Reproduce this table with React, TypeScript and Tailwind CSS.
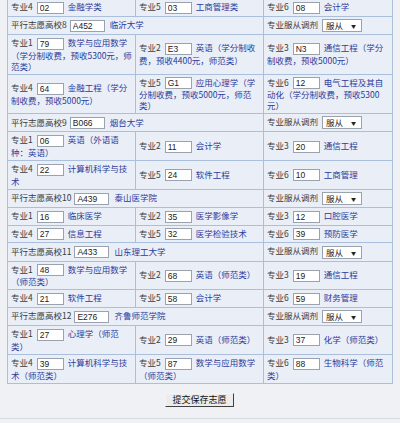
import React from "react";

// names are kept as the lines they break into in the form
type Major = { n: number; code: string; name: string[] };
type School = {
  no: number;
  code: string;
  name: string;
  majors: Major[];
};

const HEAD: Major[] = [
  { n: 4, code: "02", name: ["金融学类"] },
  { n: 5, code: "03", name: ["工商管理类"] },
  { n: 6, code: "08", name: ["会计学"] },
];

const SCHOOLS: School[] = [
  {
    no: 8,
    code: "A452",
    name: "临沂大学",
    majors: [
      { n: 1, code: "79", name: ["数学与应用数学", "（学分制收费，预收5300元，师", "范类）"] },
      { n: 2, code: "E3", name: ["英语（学分制收", "费，预收4400元，师范类）"] },
      { n: 3, code: "N3", name: ["通信工程（学分", "制收费，预收5000元）"] },
      { n: 4, code: "64", name: ["金融工程（学分", "制收费，预收5000元）"] },
      { n: 5, code: "G1", name: ["应用心理学（学", "分制收费，预收5000元，师范", "类）"] },
      { n: 6, code: "12", name: ["电气工程及其自", "动化（学分制收费，预收5300", "元）"] },
    ],
  },
  {
    no: 9,
    code: "B066",
    name: "烟台大学",
    majors: [
      { n: 1, code: "06", name: ["英语（外语语", "种：英语）"] },
      { n: 2, code: "11", name: ["会计学"] },
      { n: 3, code: "20", name: ["通信工程"] },
      { n: 4, code: "22", name: ["计算机科学与技", "术"] },
      { n: 5, code: "24", name: ["软件工程"] },
      { n: 6, code: "10", name: ["工商管理"] },
    ],
  },
  {
    no: 10,
    code: "A439",
    name: "泰山医学院",
    majors: [
      { n: 1, code: "16", name: ["临床医学"] },
      { n: 2, code: "35", name: ["医学影像学"] },
      { n: 3, code: "12", name: ["口腔医学"] },
      { n: 4, code: "27", name: ["信息工程"] },
      { n: 5, code: "32", name: ["医学检验技术"] },
      { n: 6, code: "39", name: ["预防医学"] },
    ],
  },
  {
    no: 11,
    code: "A433",
    name: "山东理工大学",
    majors: [
      { n: 1, code: "48", name: ["数学与应用数学", "（师范类）"] },
      { n: 2, code: "68", name: ["英语（师范类）"] },
      { n: 3, code: "19", name: ["通信工程"] },
      { n: 4, code: "21", name: ["软件工程"] },
      { n: 5, code: "58", name: ["会计学"] },
      { n: 6, code: "59", name: ["财务管理"] },
    ],
  },
  {
    no: 12,
    code: "E276",
    name: "齐鲁师范学院",
    majors: [
      { n: 1, code: "27", name: ["心理学（师范", "类）"] },
      { n: 2, code: "29", name: ["英语（师范类）"] },
      { n: 3, code: "37", name: ["化学（师范类）"] },
      { n: 4, code: "39", name: ["计算机科学与技", "术（师范类）"] },
      { n: 5, code: "87", name: ["数学与应用数学", "（师范类）"] },
      { n: 6, code: "88", name: ["生物科学（师范", "类）"] },
    ],
  },
];

const cell =
  "border border-[#a9bfdc] px-[3px] py-[2px] align-middle whitespace-nowrap overflow-hidden";

function Box({ value, w }: { value: string; w: string }) {
  return (
    <input
      readOnly
      value={value}
      className={`${w} h-[12px] inline-block align-middle bg-white border border-[#9aa3ad] px-[2px] text-[8.5px] text-[#222] leading-[10px] outline-none`}
      style={{ fontFamily: '"Liberation Sans", Arial, sans-serif' }}
    />
  );
}

function MajorCell({ m }: { m: Major }) {
  return (
    <td className={cell}>
      <span className="text-[#3c3c3c]">专业{m.n}</span>
      <span className="ml-[4px]">
        <Box value={m.code} w="w-[27px]" />
      </span>
      <span className="ml-[4px] text-[#2c3b9c]">
        {m.name.map((line, i) => (
          <React.Fragment key={i}>
            {i > 0 && <br />}
            {line}
          </React.Fragment>
        ))}
      </span>
    </td>
  );
}

function ObeyCell() {
  return (
    <td className={cell}>
      <span className="text-[#3c3c3c]">专业服从调剂</span>
      <span className="ml-[4px] inline-flex align-middle items-center justify-between w-[40px] h-[13px] bg-white border border-[#9aa3ad] pl-[3px] pr-[5px] text-[#222]">
        <span>服从</span>
        <span className="text-[5px]">▼</span>
      </span>
    </td>
  );
}

function SchoolRow({ s }: { s: School }) {
  return (
    <tr>
      <td colSpan={2} className={cell}>
        <span className="text-[#3c3c3c]">平行志愿高校{s.no}</span>
        <span className="ml-[3px]">
          <Box value={s.code} w="w-[35px]" />
        </span>
        <span className="ml-[5px] text-[#2c3b9c]">{s.name}</span>
      </td>
      <ObeyCell />
    </tr>
  );
}

export default function App() {
  return (
    <div
      className="w-[400px] h-[423px] overflow-hidden bg-[#eff1f5] text-[8.5px] leading-[11px]"
      style={{ fontFamily: '"Noto Sans CJK SC", "Liberation Sans", sans-serif' }}
    >
      <div className="h-[421px] border-b border-[#d6d9de]">
        <table className="-mt-[2px] ml-[7px] w-[385px] table-fixed border-collapse bg-[#e9eef7]">
          <colgroup>
            <col className="w-[128px]" />
            <col className="w-[128px]" />
            <col className="w-[129px]" />
          </colgroup>
          <tbody>
            <tr>
              {HEAD.map((m) => (
                <MajorCell key={m.n} m={m} />
              ))}
            </tr>
            {SCHOOLS.map((s) => (
              <React.Fragment key={s.no}>
                <SchoolRow s={s} />
                <tr>
                  {s.majors.slice(0, 3).map((m) => (
                    <MajorCell key={m.n} m={m} />
                  ))}
                </tr>
                <tr>
                  {s.majors.slice(3).map((m) => (
                    <MajorCell key={m.n} m={m} />
                  ))}
                </tr>
              </React.Fragment>
            ))}
          </tbody>
        </table>
        <div className="mt-[9px] ml-[7px] w-[385px] flex justify-center">
          <button className="h-[14px] px-[6px] bg-[#ececec] border border-t-[#f4f4f4] border-l-[#f4f4f4] border-r-[#404040] border-b-[#404040] text-[9px] leading-[12px] text-[#111]">
            提交保存志愿
          </button>
        </div>
      </div>
    </div>
  );
}
